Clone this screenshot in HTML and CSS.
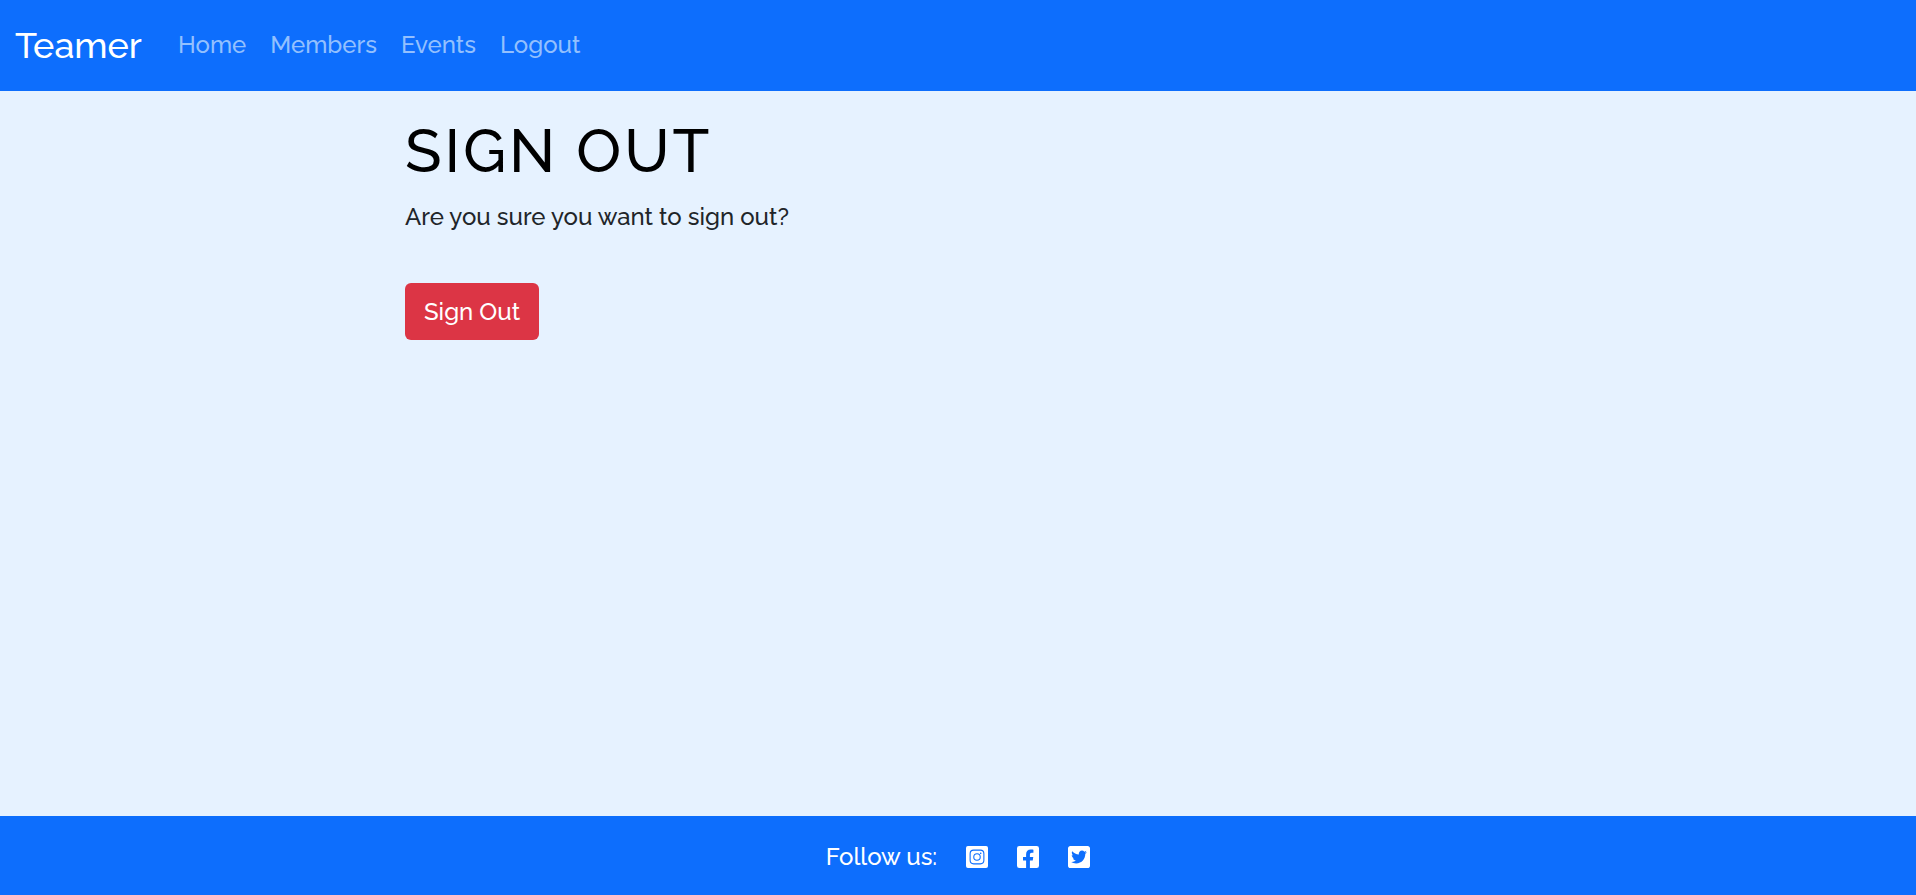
FILE: index.html
```html
<!DOCTYPE html>
<html lang="en">
<head>
<meta charset="utf-8">
<meta name="viewport" content="width=device-width, initial-scale=1">
<title>Teamer - Sign Out</title>
<link rel="stylesheet" href="styles.css">
</head>
<body>
<header class="navbar">
  <a class="brand" href="#">Teamer</a>
  <nav class="nav">
    <a class="nav-link" href="#">Home</a>
    <a class="nav-link" href="#">Members</a>
    <a class="nav-link" href="#">Events</a>
    <a class="nav-link" href="#">Logout</a>
  </nav>
</header>
<main class="content">
  <h1 class="title">Sign Out</h1>
  <p class="lead">Are you sure you want to sign out?</p>
  <form class="form">
    <button class="btn" type="button">Sign Out</button>
  </form>
</main>
<footer class="footer">
  <span>Follow us:</span>
  <a class="social" href="#" aria-label="Instagram">
    <svg viewBox="0 0 448 448">
      <path fill="#fff" d="M40 0h368a40 40 0 0 1 40 40v368a40 40 0 0 1-40 40H40a40 40 0 0 1-40-40V40A40 40 0 0 1 40 0z"/>
      <rect x="84" y="84" width="280" height="280" rx="72" fill="none" stroke="#0d6efd" stroke-width="22"/>
      <circle cx="224" cy="224" r="66" fill="none" stroke="#0d6efd" stroke-width="22"/>
      <circle cx="299" cy="149" r="17" fill="#0d6efd"/>
    </svg>
  </a>
  <a class="social" href="#" aria-label="Facebook">
    <svg viewBox="0 32 448 448">
      <path fill="#fff" d="M400 32H48A48 48 0 0 0 0 80v352a48 48 0 0 0 48 48h137.25V327.69h-63V256h63v-54.64c0-62.15 37-96.48 93.67-96.48 27.14 0 55.52 4.84 55.52 4.84v61h-31.27c-30.81 0-40.42 19.12-40.42 38.73V256h68.78l-11 71.69h-57.78V480H400a48 48 0 0 0 48-48V80a48 48 0 0 0-48-48z"/>
    </svg>
  </a>
  <a class="social" href="#" aria-label="Twitter">
    <svg viewBox="0 32 448 448">
      <path fill="#fff" d="M400 32H48C21.500 32 0 53.500 0 80v352c0 26.500 21.500 48 48 48h352c26.500 0 48-21.500 48-48V80c0-26.500-21.500-48-48-48zm-48.900 158.800c.2 2.800.2 5.700.2 8.500 0 86.700-66 186.600-186.600 186.600-37.200 0-71.700-10.800-100.700-29.400 5.300.6 10.400.8 15.800.8 30.700 0 58.900-10.400 81.400-28-28.800-.6-53-19.500-61.300-45.500 10.100 1.500 19.200 1.500 29.600-1.200-30-6.100-52.500-32.500-52.500-64.400v-.8c8.700 4.900 18.900 7.900 29.600 8.300a65.447 65.447 0 0 1-29.200-54.600c0-12.200 3.200-23.400 8.900-33.100 32.300 39.800 80.800 65.800 135.200 68.600-9.300-44.500 24-80.600 64-80.600 18.900 0 35.900 7.900 47.900 20.700 14.800-2.800 29-8.300 41.600-15.800-4.900 15.200-15.200 28-28.800 36.100 13.200-1.400 26-5.100 37.800-10.200-8.900 13.100-20.100 24.700-32.900 34z"/>
    </svg>
  </a>
</footer>
</body>
</html>
```

FILE: styles.css
```css
* {
  box-sizing: border-box;
}

body {
  margin: 0;
  min-height: 100vh;
  display: flex;
  flex-direction: column;
  background: #e6f2ff;
  color: #212529;
  font-family: Raleway, Lato, sans-serif;
  font-size: 24px;
  font-weight: 500;
  line-height: 36px;
}

a {
  color: #fff;
  text-decoration: none;
}

.navbar {
  display: flex;
  align-items: center;
  gap: 36px;
  padding: 18px 15px 19px;
  background: #0d6efd;
}

.brand {
  font-size: 36px;
  line-height: 54px;
}

.nav {
  display: flex;
  gap: 24px;
}

.nav-link {
  color: #93c0fe;
}

.content {
  flex: 1;
  width: 100%;
  max-width: 1130px;
  margin: 0 auto;
  padding: 24px 12px;
}

.title {
  margin: 0 0 12px;
  color: #000;
  font-size: 60px;
  font-weight: 500;
  line-height: 72px;
  letter-spacing: 3px;
  text-transform: uppercase;
}

.lead {
  margin: 0 0 48px;
}

.btn {
  padding: 11px 19px 10px;
  border: 0;
  border-radius: 6px;
  background: #dc3545;
  color: #fff;
  font: inherit;
}

.footer {
  display: flex;
  justify-content: center;
  align-items: center;
  gap: 29px;
  padding: 23px 16px 20px;
  background: #0d6efd;
  color: #fff;
}

.social {
  display: flex;
}

.social svg {
  width: 22px;
  height: 22px;
}
```
